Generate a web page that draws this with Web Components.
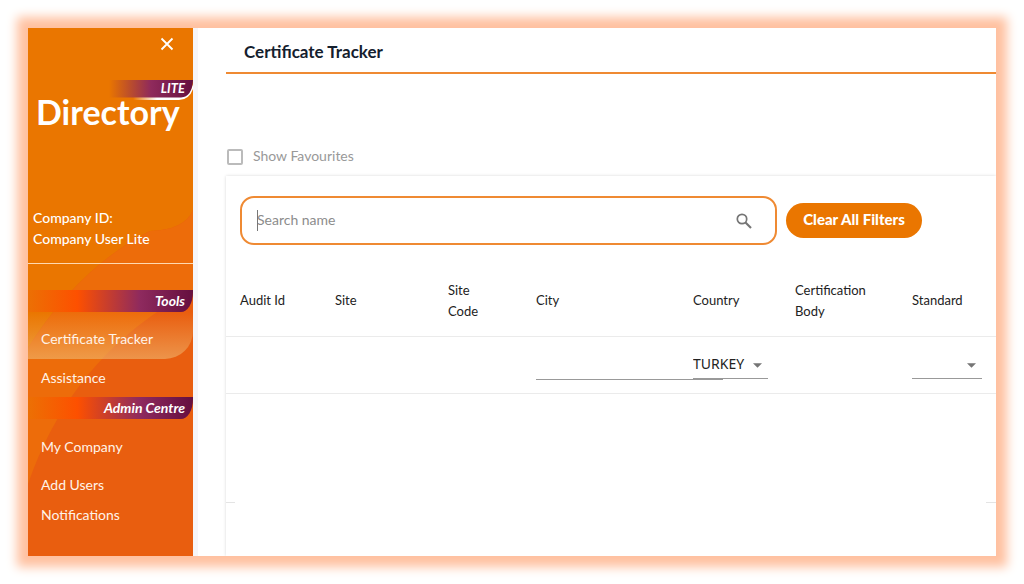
<!DOCTYPE html>
<html lang="en">
<head>
<meta charset="utf-8">
<meta name="viewport" content="width=device-width, initial-scale=1">
<title>Certificate Tracker</title>
<style>
  html { background: #fff; }
  body { margin: 0; font-family: Lato, "Open Sans", sans-serif; font-size: 14px; line-height: 21px; color: #333; }
</style>
</head>
<body>
<app-frame>
  <side-bar slot="side">
    <side-section heading="Tools">
      <side-link active>Certificate Tracker</side-link>
      <side-link>Assistance</side-link>
    </side-section>
    <side-section heading="Admin Centre" spaced>
      <side-link>My Company</side-link>
      <side-link>Add Users</side-link>
      <side-link compact>Notifications</side-link>
    </side-section>
  </side-bar>
  <page-header>Certificate Tracker</page-header>
  <favourites-toggle>Show Favourites</favourites-toggle>
  <tracker-card>
    <search-bar slot="tools"></search-bar>
    <audit-table></audit-table>
  </tracker-card>
</app-frame>

<script>
const define = (name, html, setup) => {
  const template = document.createElement('template');
  template.innerHTML = html;
  customElements.define(name, class extends HTMLElement {
    constructor() {
      super();
      this.attachShadow({ mode: 'open' }).append(template.content.cloneNode(true));
    }
    connectedCallback() { if (setup) setup(this, this.shadowRoot); }
  });
};

define('app-frame', `
  <style>
    :host { display: block; box-sizing: border-box; min-height: 100vh; padding: 28px; }
    :host, .frame { display: flex; }
    .frame { flex: 1; min-width: 0; background: #fff; box-shadow: 0 0 10px 11px #ffc1a0; }
    main { flex: 1; min-width: 0; display: flex; flex-direction: column; padding-left: 28px; overflow: hidden; border-left: 5px solid #f6f5f8; }
  </style>
  <div class="frame"><slot name="side"></slot><main><slot></slot></main></div>
`);

define('side-bar', `
  <style>
    :host { display: block; position: relative; flex: 0 0 165px; background: #e95e0f; color: #fff; overflow: hidden; }
    .waves { position: absolute; top: 0; left: 0; width: 165px; height: 528px; }
    .content { position: relative; }
    .top { display: flex; justify-content: flex-end; padding: 8px 18px 0 0; }
    button { display: block; padding: 0; border: 0; background: none; width: 16px; height: 16px; cursor: pointer; }
    button svg { display: block; }
    .logo { position: relative; height: 72px; margin-top: 28px; }
    .name { position: absolute; left: 8px; top: 18px; font-size: 34px; line-height: 28px; font-weight: 700; }
    .lite { position: absolute; right: 0; top: 0; display: block; }
    .tag { position: absolute; right: 8px; top: 0; font-size: 13px; line-height: 17px; font-weight: 700; font-style: italic; }
    .company { margin: 55px 0 0; padding: 0 5px 14px; border-bottom: 1px solid #ffd9b0; font-weight: 500; }
    .company p { margin: 0; }
    nav { padding-top: 26px; }
  </style>
  <svg class="waves" viewBox="0 0 165 528" aria-hidden="true">
    <path d="M0 0H165V182Q157 202 122 203Q50 240 0 320Z" fill="#ea7600"/>
    <path d="M165 182Q157 202 122 203Q50 240 0 320V456Q38 345 132 282L165 264Z" fill="#ed6c0a"/>
  </svg>
  <div class="content">
    <div class="top"><button aria-label="Close menu"><svg width="16" height="16" viewBox="0 0 16 16"><path d="M2.500 2.500l11 11M13.500 2.500l-11 11" stroke="#fff" stroke-width="1.800"/></svg></button></div>
    <div class="logo">
      <svg class="lite" width="84" height="21" viewBox="0 0 84 21" aria-hidden="true">
        <defs><linearGradient id="g"><stop offset="0" stop-color="#8b2252" stop-opacity="0"/><stop offset=".5" stop-color="#8f2a5c"/><stop offset="1" stop-color="#650f3f"/></linearGradient>
        <linearGradient id="w"><stop offset="0" stop-color="#fff" stop-opacity="0"/><stop offset=".4" stop-color="#fff"/></linearGradient></defs>
        <path d="M24 17H72Q81 16 84 4V9Q80 20 70 20H24Z" fill="url(#w)"/>
        <path d="M0 0H84Q83 17 72 17.500H0Z" fill="url(#g)"/>
      </svg>
      <span class="tag">LITE</span>
      <span class="name">Directory</span>
    </div>
    <div class="company"><p>Company ID:</p><p>Company User Lite</p></div>
    <nav><slot></slot></nav>
  </div>
`);

define('side-section', `
  <style>
    :host { display: block; }
    h2 { margin: 0; padding-right: 8px; height: 22px; line-height: 21px; text-align: right; font-size: 14px; font-weight: 700; font-style: italic;
      background: linear-gradient(90deg, #ec7004, #fd5000 30%, #8e2a5e 68%, #650f3f); border-bottom-right-radius: 12px 20px; }
    :host([spaced]) .items { padding-top: 9px; }
  </style>
  <h2></h2>
  <div class="items"><slot></slot></div>
`, (host, root) => { root.querySelector('h2').textContent = host.getAttribute('heading'); });

define('side-link', `
  <style>
    :host { display: block; }
    a { display: block; box-sizing: border-box; height: 38px; line-height: 37px; padding-left: 13px; color: #fff3e8; text-decoration: none; }
    :host([active]) a { height: 47px; padding-top: 8px; background: linear-gradient(#f0be7800, #f0be7890); border-bottom-right-radius: 28px; }
    :host([compact]) a { height: 22px; line-height: 22px; }
  </style>
  <a href="#"><slot></slot></a>
`);

define('page-header', `
  <style>
    :host { display: block; border-bottom: 2px solid #ef8a33; padding: 3px 18px 0; }
    h1 { margin: 0; font-size: 17px; line-height: 41px; font-weight: 700; color: #14202e; }
  </style>
  <h1><slot></slot></h1>
`);

define('favourites-toggle', `
  <style>
    :host { display: block; margin-top: 64px; }
    label { display: inline-flex; align-items: center; gap: 10px; height: 38px; color: #999; padding-left: 1px; }
    span { padding-bottom: 3px; }
    input { appearance: none; box-sizing: border-box; width: 16px; height: 16px; margin: 0; border: 2px solid #bbb; border-radius: 2px; background: #fff; }
    input:checked { background: #ea7600; }
  </style>
  <label><input type="checkbox"><span><slot></slot></span></label>
`);

define('tracker-card', `
  <style>
    :host { display: block; flex: 1; padding-top: 20px; background: #fff; box-shadow: 0 0 3px #00000028; }
  </style>
  <slot name="tools"></slot><slot></slot>
`);

define('search-bar', `
  <style>
    :host { display: flex; align-items: center; gap: 9px; margin: 0 74px 20px 14px; }
    .field { position: relative; flex: 1; min-width: 0; display: flex; align-items: center; box-sizing: border-box; height: 49px; padding: 0 23px 0 15px; border: 2px solid #ef8a33; border-radius: 14px; }
    input { flex: 1; min-width: 0; border: 0; outline: 0; padding: 0 0 3px; background: none; font: inherit; color: #333; }
    input::placeholder { color: #8c8c8c; opacity: 1; }
    .caret { position: absolute; left: 15px; top: 12px; width: 1px; height: 21px; background: #777; }
    svg { display: block; }
    button { flex: 0 0 136px; height: 35px; padding: 0 0 2px; border: 0; border-radius: 18px; background: #ea7600; color: #fff; font: inherit; font-size: 15px; font-weight: 900; cursor: pointer; }
  </style>
  <div class="field">
    <input type="text" placeholder="Search name" aria-label="Search name"><span class="caret"></span>
    <svg width="16" height="16" viewBox="0 0 16 16" aria-hidden="true"><circle cx="6" cy="6" r="4.700" fill="none" stroke="#757575" stroke-width="1.700"/><path d="M9.500 9.500l5.500 5.500" stroke="#757575" stroke-width="2.100"/></svg>
  </div>
  <button type="button">Clear All Filters</button>
`);

define('filter-select', `
  <style>
    :host { display: block; position: relative; }
    select { display: block; appearance: none; box-sizing: border-box; width: 100%; height: 30px; margin: 0; padding: 0; border: 0; border-bottom: 1px solid #999; border-radius: 0; outline: 0; background: none; font: 14px "Noto Sans", sans-serif; color: #222; }
    svg { position: absolute; right: 6px; top: 14px; pointer-events: none; }
  </style>
  <select></select>
  <svg width="9" height="5" viewBox="0 0 10 5" aria-hidden="true"><path d="M0 0h10L5 5z" fill="#757575"/></svg>
`, (host, root) => {
  const select = root.querySelector('select');
  select.setAttribute('aria-label', host.getAttribute('label'));
  select.replaceChildren(new Option(host.getAttribute('value') || ''));
});

define('audit-table', `
  <style>
    :host { display: block; }
    table { width: 100%; table-layout: fixed; border-collapse: separate; border-spacing: 0; }
    th, td { box-sizing: border-box; padding: 0 0 0 14px; border-bottom: 1px solid #ebebeb; text-align: left; vertical-align: middle; }
    th { height: 72px; padding-right: 20px; font-size: 13px; line-height: 21px; font-weight: 400; color: #222; }
    td { height: 57px; padding-top: 12px; vertical-align: top; }
    .id { width: 95px; } .site { width: 113px; } .code { width: 88px; } .country { width: 102px; } .body { width: 117px; } .standard { width: 98px; }
    th.standard { padding-right: 0; }
    .city-filter { display: block; box-sizing: border-box; width: 187px; height: 31px; padding: 0; border: 0; border-bottom: 1px solid #999; border-radius: 0; outline: 0; background: none; font: inherit; }
    .country-filter { width: 75px; } .standard-filter { width: 70px; }
    .empty { height: 109px; border: 0; background: linear-gradient(#e4e4e4, #e4e4e4) left bottom / 9px 1px no-repeat, linear-gradient(#e4e4e4, #e4e4e4) right bottom / 10px 1px no-repeat; }
  </style>
  <table>
    <thead><tr><th class="id">Audit Id</th><th class="site">Site</th><th class="code">Site Code</th><th>City</th><th class="country">Country</th><th class="body">Certification Body</th><th class="standard">Standard</th></tr></thead>
    <tbody>
      <tr><td></td><td></td><td></td><td><input class="city-filter" type="text" aria-label="City"></td><td><filter-select class="country-filter" label="Country" value="TURKEY"></filter-select></td><td></td><td><filter-select class="standard-filter" label="Standard"></filter-select></td></tr>
      <tr><td class="empty" colspan="7"></td></tr>
    </tbody>
  </table>
`);
</script>
</body>
</html>
